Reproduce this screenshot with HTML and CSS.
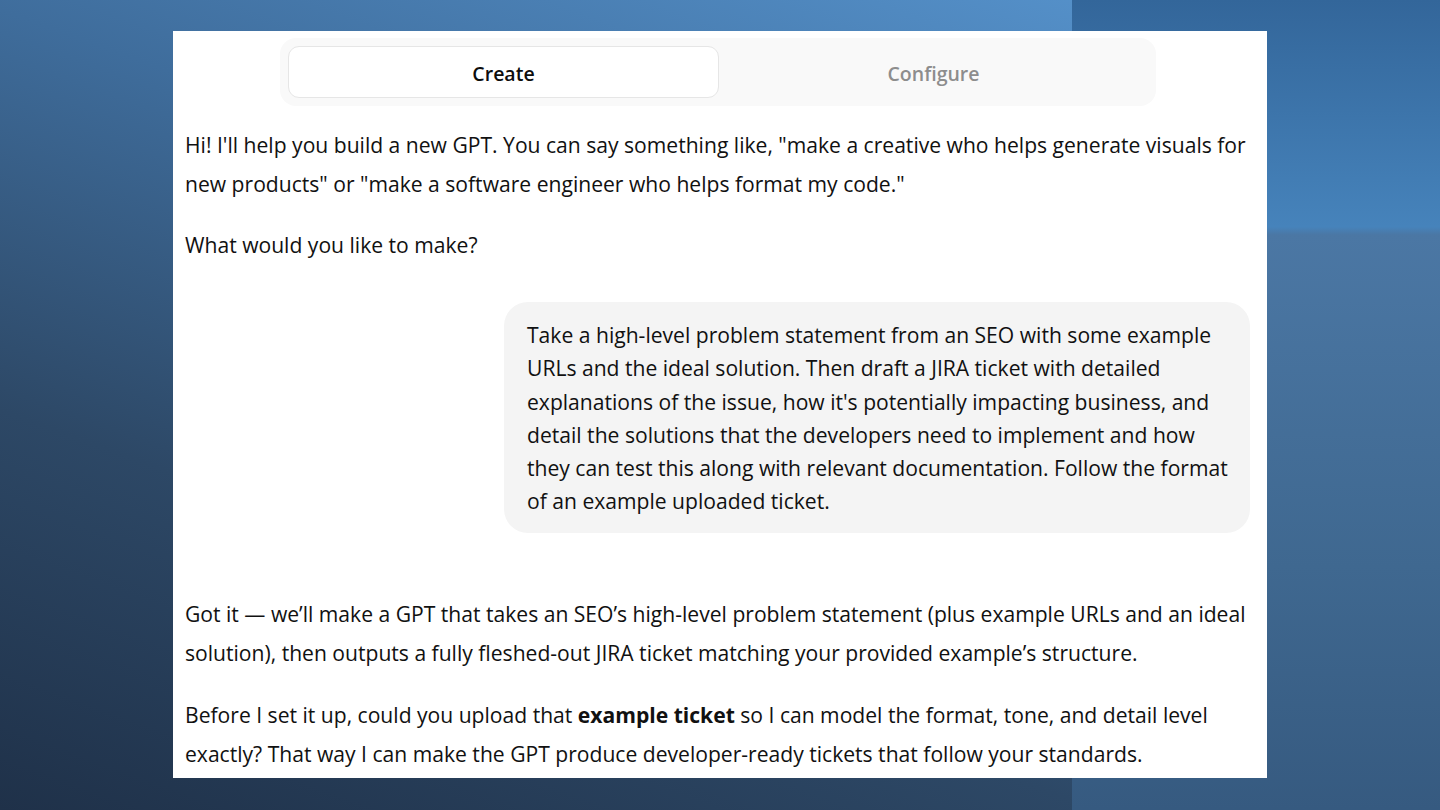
FILE: index.html
```html
<!DOCTYPE html>
<html lang="en">
<head>
<meta charset="utf-8">
<title>Create GPT</title>
<link rel="stylesheet" href="styles.css">
</head>
<body>
<main class="card">
  <nav class="tabs">
    <div class="tab tab-active">Create</div>
    <div class="tab tab-muted">Configure</div>
  </nav>
  <section class="thread">
    <div class="msg-assistant">
      <p>Hi! I'll help you build a new GPT. You can say something like, "make a creative who helps generate visuals for<br>new products" or "make a software engineer who helps format my code."</p>
      <p>What would you like to make?</p>
    </div>
    <div class="msg-user">
      <div class="bubble">Take a high-level problem statement from an SEO with some example<br>URLs and the ideal solution. Then draft a JIRA ticket with detailed<br>explanations of the issue, how it's potentially impacting business, and<br>detail the solutions that the developers need to implement and how<br>they can test this along with relevant documentation. Follow the format<br>of an example uploaded ticket.</div>
    </div>
    <div class="msg-assistant msg-reply">
      <p>Got it — we’ll make a GPT that takes an SEO’s high-level problem statement (plus example URLs and an ideal<br>solution), then outputs a fully fleshed-out JIRA ticket matching your provided example’s structure.</p>
      <p>Before I set it up, could you upload that <strong>example ticket</strong> so I can model the format, tone, and detail level<br>exactly? That way I can make the GPT produce developer-ready tickets that follow your standards.</p>
    </div>
  </section>
</main>
</body>
</html>
```
FILE: styles.css
```css
html, body {
  margin: 0;
  height: 810px;
  overflow: hidden;
}
body {
  padding: 31px 0 0 173px;
  box-sizing: border-box;
  font-family: "Open Sans", "Noto Sans", sans-serif;
  background:
    linear-gradient(180deg, #33669a 0%, #4683bb 28%, #4b77a4 29%, #3f6890 70%, #365a80 100%) 1072px 0 / 368px 810px no-repeat,
    linear-gradient(20deg, #1f3149 0%, #2d4866 30%, #3f6d9c 60%, #5b9bd7 100%);
}
.card {
  width: 1094px;
  height: 747px;
  background: #ffffff;
  box-sizing: border-box;
  padding: 7px 4px 0 12px;
  overflow: hidden;
  color: #111111;
}
.tabs {
  width: 876px;
  margin: 0 auto 0 95px;
  box-sizing: border-box;
  background: #f9f9f9;
  border-radius: 16px;
  padding: 8px;
  display: flex;
}
.tab {
  flex: 1;
  height: 52px;
  display: flex;
  align-items: center;
  justify-content: center;
  font-size: 19.5px;
  font-weight: 600;
  border-radius: 11px;
  box-sizing: border-box;
  padding-top: 2px;
}
.tab-active {
  background: #ffffff;
  border: 1.5px solid #e6e6e6;
  color: #0d0d0d;
}
.tab-muted {
  color: #8d8d8d;
}
.thread {
  padding-top: 19px;
  font-size: 21.1px;
  line-height: 39px;
  white-space: nowrap;
}
.msg-assistant p {
  margin: 0 0 22px 0;
}
.msg-assistant p:last-child {
  margin-bottom: 0;
}
.msg-user {
  display: flex;
  justify-content: flex-end;
  margin-top: 38px;
  padding-right: 13px;
}
.bubble {
  width: 746px;
  box-sizing: border-box;
  background: #f4f4f4;
  border-radius: 24px;
  padding: 16px 20px 15px 23px;
  font-size: 21.1px;
  line-height: 33.3px;
}
.msg-reply {
  margin-top: 61px;
}
.msg-reply p {
  margin-bottom: 23px;
}
strong {
  font-weight: 700;
}
```
